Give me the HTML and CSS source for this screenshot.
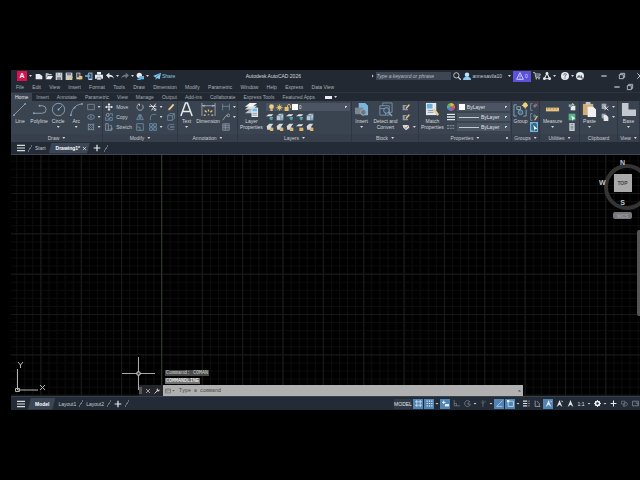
FILE: index.html
```
<!DOCTYPE html>
<html lang="en">
<head>
<meta charset="utf-8">
<title>Autodesk AutoCAD 2026</title>
<link rel="stylesheet" href="styles.css">
</head>
<body>
<svg class="sprite" aria-hidden="true">
  <symbol id="new" viewBox="0 0 12 12"><path d="M1 3h6l4 3v5H1z" fill="#e8ebee"/></symbol>
  <symbol id="open" viewBox="0 0 12 12"><path d="M1 2h4l1 1h4v2H4l-3 5z" fill="#c3c9cf"/><path d="M4 6h8l-3 5H1z" fill="#eef0f2"/></symbol>
  <symbol id="save" viewBox="0 0 12 12"><path d="M1 1h10v11H1z" fill="#c9ced3"/><path d="M3 1h6v4H3zM3 8h6v4H3z" fill="#78828c"/><path d="M4 2h4v2H4z" fill="#fff"/></symbol>
  <symbol id="saveas" viewBox="0 0 12 12"><path d="M1 1h10v11H1z" fill="#c9ced3"/><path d="M3 1h6v4H3z" fill="#78828c"/><path d="M5 11l5-5 2 2-5 4z" fill="#e6c278"/></symbol>
  <symbol id="phone" viewBox="0 0 12 12"><path d="M2 1h6v10H2z" fill="#d9d3c4"/><path d="M3 2h4v6H3z" fill="#4e5661"/><path d="M6 6h5v5H6z" fill="#e2c27c"/></symbol>
  <symbol id="mobile" viewBox="0 0 12 12"><path d="M5 1h6v11H5z" fill="#b9d7ec"/><path d="M6 2h4v8H6z" fill="#39506a"/><path d="M0 5h4V3l4 3-4 3V7H0z" fill="#60b5e6"/></symbol>
  <symbol id="print" viewBox="0 0 12 12"><path d="M3 0h6v4h3v6H9v2H3v-2H0V4h3z" fill="#e8ebee"/><path d="M3 4h6M3 8h6v3H3z" fill="none" stroke="#6c7681"/></symbol>
  <symbol id="undo" viewBox="0 0 12 12"><path d="M0 5l5-4v3c4 0 6 2 7 6-2-3-4-3-7-3v3z" fill="#e8ebee"/></symbol>
  <symbol id="redo" viewBox="0 0 12 12"><path d="M12 5L7 1v3C3 4 1 6 0 10c2-3 4-3 7-3v3z" fill="#6d7680"/></symbol>
  <symbol id="globe" viewBox="0 0 12 12"><circle cx="5" cy="5" r="4" fill="#e8ebee"/><path d="M5 6h7v5H5z" fill="#67b5e3"/><path d="M2 11h5" stroke="#67b5e3" stroke-width="2"/></symbol>
  <symbol id="send" viewBox="0 0 12 12"><path d="M0 6L12 1l-2 10-4-2-2 3V8z" fill="#7dcdf2"/><path d="M4 8l6-5" stroke="#27536d"/></symbol>
  <symbol id="mag" viewBox="0 0 12 12"><circle cx="5" cy="5" r="4" fill="none" stroke="#c3c9cf" stroke-width="1.4"/><path d="M8 8l4 4" stroke="#c3c9cf" stroke-width="2"/></symbol>
  <symbol id="user" viewBox="0 0 12 12"><circle cx="6" cy="4" r="3.4" fill="#bfe1f5"/><path d="M0 12c0-4 2-5 6-5s6 1 6 5z" fill="#8fc9ed"/></symbol>
  <symbol id="tri" viewBox="0 0 12 12"><path d="M6 1l5 10H1zM6 5v3M6 9v1" fill="none" stroke="currentColor" stroke-width="1.3"/></symbol>
  <symbol id="cart" viewBox="0 0 12 12"><path d="M0 1h3l1 7h7M3 3h8l-1 3H4" fill="none" stroke="#aeb4bb" stroke-width="1.5"/><circle cx="5" cy="10" r="1.2" fill="#aeb4bb"/><circle cx="9" cy="10" r="1.2" fill="#aeb4bb"/></symbol>
  <symbol id="app" viewBox="0 0 12 12"><path d="M6 2l4 8H2z" fill="none" stroke="#e8ebee" stroke-width="1.6"/><circle cx="6" cy="2" r="2" fill="#e8ebee"/><circle cx="2" cy="10" r="2" fill="#e8ebee"/><circle cx="10" cy="10" r="2" fill="#e8ebee"/></symbol>
  <symbol id="help" viewBox="0 0 12 12"><circle cx="6" cy="6" r="6" fill="#e8ebee"/><path d="M4 5c0-3 4-3 4-1 0 1-2 1-2 3M6 8v2" fill="none" stroke="#414954" stroke-width="1.3"/></symbol>
  <symbol id="chat" viewBox="0 0 12 12"><circle cx="6" cy="6" r="6" fill="#e8ebee"/><path d="M3 9V6h3v3M8 5v4h3" stroke="#414954" stroke-width="1.5" fill="none"/></symbol>
  <symbol id="min" viewBox="0 0 12 12"><path d="M2 6h8" stroke="#e0e3e6" stroke-width="1.6"/></symbol>
  <symbol id="restore" viewBox="0 0 12 12"><path d="M2 4h6v6H2zM4 4V2h6v6H8" fill="none" stroke="#c3c9cf" stroke-width="1.3"/></symbol>
  <symbol id="x" viewBox="0 0 12 12"><path d="M2 2l8 8M10 2l-8 8" stroke="currentColor" stroke-width="1.5"/></symbol>
  <symbol id="burger" viewBox="0 0 12 12"><path d="M0 2h12M0 6h12M0 10h12" stroke="#d9dde0" stroke-width="1.8"/></symbol>
  <symbol id="plus" viewBox="0 0 12 12"><path d="M6 1v10M1 6h10" stroke="#e8ebee" stroke-width="1.8"/></symbol>

  <symbol id="line" viewBox="0 0 16 16"><path d="M2 14L14 2" stroke="#a9b2bb" stroke-width=".8"/><circle cx="2" cy="14" r="1" fill="#7fa9c4"/><circle cx="14" cy="2" r="1" fill="#7fa9c4"/></symbol>
  <symbol id="pline" viewBox="0 0 16 16"><path d="M2 12h9a4 4 0 0 0 0-8H8" fill="none" stroke="#a9b2bb" stroke-width=".8"/><circle cx="2" cy="12" r="1" fill="#7fa9c4"/><circle cx="8" cy="4" r="1" fill="#7fa9c4"/></symbol>
  <symbol id="circle" viewBox="0 0 16 16"><circle cx="8" cy="8" r="6.6" fill="none" stroke="#a9b2bb" stroke-width=".8"/><path d="M8 8l4-4" stroke="#6ba6cc"/><circle cx="8" cy="8" r="1" fill="#7fc0ea"/></symbol>
  <symbol id="arc" viewBox="0 0 16 16"><path d="M2 14C3 7 7 3 14 2" fill="none" stroke="#a9b2bb" stroke-width=".8"/><circle cx="2" cy="14" r="1" fill="#7fa9c4"/><circle cx="6" cy="6" r="1" fill="#7fa9c4"/><circle cx="14" cy="2" r="1" fill="#7fa9c4"/></symbol>
  <symbol id="rect" viewBox="0 0 12 12"><path d="M1 2h10v8H1z" fill="none" stroke="#8f9ca8"/></symbol>
  <symbol id="ellipse" viewBox="0 0 12 12"><ellipse cx="6" cy="6" rx="5" ry="3.5" fill="none" stroke="#9aa7b3"/><circle cx="6" cy="6" r="1" fill="#7fc0ea"/></symbol>
  <symbol id="hatch" viewBox="0 0 12 12"><path d="M2 1v10M10 1v10M2 2h8M2 10h8" stroke="#9aa7b3" fill="none"/><path d="M3 6l3-3M3 9l6-6M6 9l3-3" stroke="#6798b8"/></symbol>
  <symbol id="move" viewBox="0 0 12 12"><path d="M6 1v10M1 6h10" stroke="#e8ebee" stroke-width="1.5"/><path d="M6 0l2 3H4zM6 12l2-3H4zM0 6l3-2v4zM12 6L9 4v4z" fill="#e8ebee"/></symbol>
  <symbol id="copy" viewBox="0 0 12 12"><circle cx="4" cy="3" r="2.3" fill="none" stroke="#b5bdc5"/><path d="M1 6v5h4V7M7 1h4v4M7 7h4v4H7z" fill="none" stroke="#73a9c8"/></symbol>
  <symbol id="stretch" viewBox="0 0 12 12"><path d="M1 1h4v10H1zM7 4h3v7H5" fill="none" stroke="#a4b1bd"/><path d="M7 9h5" stroke="#72b4dc"/></symbol>
  <symbol id="rotate" viewBox="0 0 12 12"><path d="M9 2.5A4.7 4.7 0 1 1 4 2" fill="none" stroke="#b5bdc5" stroke-width="1.2"/><path d="M2 1h4v4z" fill="#b5bdc5"/></symbol>
  <symbol id="trim" viewBox="0 0 12 12"><path d="M2 2l8 8M10 1L4 11M0 5h11" stroke="#e8ebee" stroke-width="1.3"/><circle cx="9" cy="10" r="1.6" fill="none" stroke="#e8ebee"/></symbol>
  <symbol id="pencil" viewBox="0 0 12 12"><path d="M2 9l7-8 2 2-7 8z" fill="#ead0a0"/><path d="M1 11l1-3 2 3z" fill="#e7785e"/></symbol>
  <symbol id="mirror" viewBox="0 0 12 12"><path d="M5 2v8H1zM7 2v8h4z" fill="none" stroke="#79a8c4"/></symbol>
  <symbol id="fillet" viewBox="0 0 12 12"><path d="M2 11V8c0-4 2-6 6-6h3" fill="none" stroke="#78a0ba"/></symbol>
  <symbol id="box" viewBox="0 0 12 12"><path d="M1 4h7v7H1zM1 4l3-3h7l-3 3M11 1v7l-3 3" fill="none" stroke="#7ba1b9"/></symbol>
  <symbol id="scale" viewBox="0 0 12 12"><path d="M1 1h10v10H1zM1 6h5v5" fill="none" stroke="#7ba1b9"/></symbol>
  <symbol id="array" viewBox="0 0 12 12"><path d="M1 1h4v4H1zM7 1h4v4H7zM1 7h4v4H1zM7 7h4v4H7z" fill="#31455a" stroke="#7fadc9"/></symbol>
  <symbol id="offset" viewBox="0 0 12 12"><path d="M11 2H5a4 4 0 0 0 0 8h6M11 5H6a1 1 0 0 0 0 2h5" fill="none" stroke="#7893a7"/></symbol>
  <symbol id="text" viewBox="0 0 16 16"><path d="M2 15L7 1h2l5 14M4 10h8" fill="none" stroke="#e8ebee" stroke-width="1.6"/></symbol>
  <symbol id="dim" viewBox="0 0 16 16"><path d="M1 1v14M15 1v14M1 4h14" stroke="#b5bdc5" stroke-width=".8"/><path d="M1 4l3-1v2zM15 4l-3-1v2z" fill="#b5bdc5"/><path d="M8 8v2M4 9l2 2M12 9l-2 2M3 14h2M11 14h2M8 13v1" stroke="#e8c678" stroke-width="1.4"/></symbol>
  <symbol id="linear" viewBox="0 0 12 12"><path d="M1 1v10M11 1v10M1 5h10" stroke="#7b9db5"/></symbol>
  <symbol id="leader" viewBox="0 0 12 12"><path d="M1 11l5-7h2" fill="none" stroke="#b5bdc5"/><circle cx="9.500" cy="3.500" r="2" fill="none" stroke="#b5bdc5"/></symbol>
  <symbol id="table" viewBox="0 0 12 12"><path d="M1 1h10v10H1zM1 4h10M1 7h10M5 1v10" fill="#4f5c6b" stroke="#8c99a6"/></symbol>
  <symbol id="layers" viewBox="0 0 16 16"><path d="M1 12l5-4h8l-5 4z" fill="#b8c0c7"/><path d="M1 8l5-4h8l-5 4z" fill="#d5dadd"/><path d="M1 5l5-4h8l-5 4z" fill="#f1f3f4"/><path d="M8 6h7v10H8z" fill="#e4e8ec"/><path d="M9 7h5v3H9z" fill="#71b9e5"/><path d="M9 12h5M9 14h5" stroke="#8795a2"/></symbol>
  <symbol id="bulb" viewBox="0 0 12 12"><circle cx="6" cy="4.500" r="4" fill="#edd27d"/><path d="M4 8h4v4H4z" fill="#c9b680"/></symbol>
  <symbol id="sun" viewBox="0 0 12 12"><circle cx="6" cy="6" r="3.5" fill="#efce70"/><path d="M6 0v12M0 6h12M2 2l8 8M10 2l-8 8" stroke="#dfbb61"/></symbol>
  <symbol id="lock" viewBox="0 0 12 12"><path d="M1 5h7v7H1z" fill="#e7c16b"/><path d="M6 5V3c0-3 5-3 5 0v4" fill="none" stroke="#e7c16b" stroke-width="1.6"/></symbol>
  <symbol id="lay-a" viewBox="0 0 12 12"><path d="M0 5l4-3h7L8 5z" fill="#e0e5e8"/><path d="M4 8l3-2h4L9 9z" fill="#68afc8"/><circle cx="8" cy="9" r="2" fill="#45a78f"/></symbol>
  <symbol id="lay-b" viewBox="0 0 12 12"><path d="M1 4l4-3h6v6L7 11H1z" fill="#bac9d2"/><path d="M1 4h6l4-3M7 4v7" stroke="#5a788b" fill="none"/><path d="M7 7h4v4H7z" fill="#6fb1d3"/></symbol>
  <symbol id="lay-c" viewBox="0 0 12 12"><path d="M1 5l4-4h6L8 5v5H2z" fill="#d5dadd"/><path d="M6 7h5v5H6z" fill="#d9b875"/></symbol>
  <symbol id="lay-d" viewBox="0 0 12 12"><path d="M0 5l4-3h7L8 5z" fill="#e0e5e8"/><path d="M5 7h6v5H5z" fill="#e0b35f"/></symbol>
  <symbol id="insert" viewBox="0 0 16 16"><path d="M5 1h7l3 3v10H8V9H5z" fill="#79b6dc"/><path d="M1 6h9v7H1z" fill="#7c8793"/><circle cx="10" cy="11" r="3" fill="#6a7581" stroke="#a2abb4"/></symbol>
  <symbol id="detect" viewBox="0 0 16 16"><path d="M2 4h10v10H2zM5 4V1h10v10h-3M2 7h6v7" fill="none" stroke="#7895a9"/><circle cx="9" cy="9" r="3" fill="#3d5063" stroke="#82a8c1"/><path d="M11 11l4 4" stroke="#82a8c1" stroke-width="1.5"/></symbol>
  <symbol id="edit" viewBox="0 0 12 12"><path d="M1 3h6v2H4v4h5v2H1z" fill="#8f9aa5"/><path d="M5 8l5-6 2 1-5 6z" fill="#e1c489"/></symbol>
  <symbol id="tag" viewBox="0 0 12 12"><path d="M1 3h9l1 4-5 4-4-4z" fill="#d7dce0"/><path d="M4 6l2 2 4-5" fill="none" stroke="#b76c4e" stroke-width="1.3"/></symbol>
  <symbol id="match" viewBox="0 0 16 16"><path d="M1 1h11v13H1z" fill="#e4e8ec"/><path d="M2 2h6v5H2z" fill="#68afe0"/><path d="M3 9h6M3 11h6" stroke="#8795a2"/><path d="M8 8l2-1 5 6-2 2z" fill="#e8cf95"/></symbol>
  <symbol id="wheel" viewBox="0 0 12 12"><path d="M6 6V0a6 6 0 0 1 5.200 3z" fill="#efb64c"/><path d="M6 6l5.200-3a6 6 0 0 1 0 6z" fill="#e5644f"/><path d="M6 6l5.200 3A6 6 0 0 1 6 12z" fill="#c44f9d"/><path d="M6 6v6A6 6 0 0 1 .8 9z" fill="#4f82d7"/><path d="M6 6L.8 9a6 6 0 0 1 0-6z" fill="#47b4a5"/><path d="M6 6L.8 3A6 6 0 0 1 6 0z" fill="#7cbd59"/></symbol>
  <symbol id="bars" viewBox="0 0 12 12"><path d="M0 2h12M0 6h12M0 10h12" stroke="#e0e4e7" stroke-width="2"/></symbol>
  <symbol id="ltype" viewBox="0 0 12 12"><path d="M0 4h12M0 8h12" stroke="#7a8591" stroke-width="2" stroke-dasharray="3 1"/></symbol>
  <symbol id="group" viewBox="0 0 16 16"><path d="M4 3H1v12h3M11 15h3V8" fill="none" stroke="#8ba8bb"/><path d="M4 5h4v3H4z" fill="none" stroke="#8ba8bb"/><circle cx="8" cy="11" r="2.500" fill="#48647a" stroke="#76a5c3"/><circle cx="13" cy="3.500" r="2.600" fill="#f0d07c"/><path d="M13 0v7M9.500 3.500h7" stroke="#f0d07c"/></symbol>
  <symbol id="ungroup" viewBox="0 0 12 12"><path d="M4 1H1v10h3M6 3h2v3H6z" fill="none" stroke="#82a8c1"/><path d="M8 1l3 4M11 1L8 5" stroke="#d9566d" stroke-width="1.5"/></symbol>
  <symbol id="gedit" viewBox="0 0 12 12"><path d="M4 1H1v10h3M6 3h2v3H6z" fill="none" stroke="#82a8c1"/><path d="M6 11l4-7 2 1-4 6z" fill="#e1c489"/></symbol>
  <symbol id="gsel" viewBox="0 0 12 12"><path d="M4 1H1v10h3M9 1h2v4" fill="none" stroke="#a9d3ea"/><path d="M5 3l6 6H8l-1 3z" fill="#fff"/></symbol>
  <symbol id="measure" viewBox="0 0 16 16"><path d="M1 6h14v4H1z" fill="#e6c284"/><path d="M3 6v2M6 6v2M9 6v2M12 6v2" stroke="#97794a" stroke-width=".8"/></symbol>
  <symbol id="idp" viewBox="0 0 12 12"><path d="M4 4h7v7H4z" fill="#e8ebee"/><path d="M1 2h5v4H1z" fill="#77a8c5"/><path d="M6 1l3 2" stroke="#e8c678" stroke-width="2"/></symbol>
  <symbol id="qsel" viewBox="0 0 12 12"><path d="M1 1h10v10H1z" fill="#56b58b"/><path d="M5 4l6 4-3 1-1 3z" fill="#fff"/></symbol>
  <symbol id="calc" viewBox="0 0 12 12"><path d="M2 0h8v12H2z" fill="#c6ced5"/><path d="M4 2h4M4 5h4M4 7h4M4 9h4" stroke="#566575"/></symbol>
  <symbol id="paste" viewBox="0 0 16 16"><path d="M1 2h11v12H1z" fill="#d4ad76"/><path d="M4 0h5v3H4z" fill="#c3c9cf"/><path d="M6 5h6l3 3v8H6z" fill="#eef0f2"/></symbol>
  <symbol id="cut" viewBox="0 0 12 12"><path d="M1 1h7v8H1z" fill="#9fa9b3"/><path d="M5 5l6 6M11 5l-6 6" stroke="#e8ebee" stroke-width="1.3"/></symbol>
  <symbol id="copyclip" viewBox="0 0 12 12"><path d="M1 1h6v7H1z" fill="#9fa9b3"/><path d="M4 3h4l3 3v6H4z" fill="#e4e7ea"/></symbol>
  <symbol id="base" viewBox="0 0 16 16"><path d="M1 1h7v7h8v7H1z" fill="#c2c8ce"/></symbol>

  <symbol id="grid" viewBox="0 0 12 12"><path d="M3 0v12M9 0v12M0 3h12M0 9h12" stroke="#dcebf7" stroke-width="1.2"/></symbol>
  <symbol id="dots" viewBox="0 0 12 12"><path d="M1 2h10M1 6h10M1 10h10" stroke="#e5f1fa" stroke-width="2" stroke-dasharray="2 2"/></symbol>
  <symbol id="dyn" viewBox="0 0 12 12"><path d="M3 1v6M0 4h6" stroke="#fff" stroke-width="1.4"/><path d="M5 7h7v4H5z" fill="#e5f1fa"/></symbol>
  <symbol id="ortho" viewBox="0 0 12 12"><path d="M2 0v10h10M2 6h4v4" fill="none" stroke="#8a939d"/></symbol>
  <symbol id="polar" viewBox="0 0 12 12"><path d="M10 3a5 5 0 1 0 1 4H6l4-5" fill="none" stroke="#98a1aa"/></symbol>
  <symbol id="iso" viewBox="0 0 12 12"><path d="M5 0v12M5 6l5-4M2 3l3 3" fill="none" stroke="#7d8792"/></symbol>
  <symbol id="track" viewBox="0 0 12 12"><path d="M1 11L11 1M1 11h10" fill="none" stroke="#dcebf7"/></symbol>
  <symbol id="osnap" viewBox="0 0 12 12"><path d="M2 2h9v9H2z" fill="none" stroke="#dcebf7" stroke-width="1.2"/><path d="M0 0h4v4H0z" fill="#dcebf7"/></symbol>
  <symbol id="lw" viewBox="0 0 12 12"><path d="M0 2h7M0 6h7M0 10h7" stroke="#d9dde0" stroke-width="2"/><path d="M8 2h4M8 6h4M8 10h4" stroke="#aeb5bc"/></symbol>
  <symbol id="cycle" viewBox="0 0 12 12"><path d="M2 11V1M2 11h9M5 2l4 4v4" fill="none" stroke="#b7bdc4" stroke-width="1.2"/></symbol>
  <symbol id="ann" viewBox="0 0 12 12"><path d="M6 0l2 5 3 7-5-4-5 4 3-7z" fill="currentColor"/></symbol>
  <symbol id="ann-on" viewBox="0 0 12 12"><path d="M6 0l2 5 3 7-5-4-5 4 3-7z" fill="currentColor"/><path d="M9 1l3 3M12 1L9 4" stroke="currentColor"/></symbol>
  <symbol id="gear" viewBox="0 0 12 12"><circle cx="6" cy="6" r="3.500" fill="none" stroke="#f0f1f2" stroke-width="2.500"/><path d="M6 0v3M6 9v3M0 6h3M9 6h3M2 2l2 2M8 8l2 2M10 2L8 4M2 10l2-2" stroke="#f0f1f2" stroke-width="1.500"/></symbol>
  <symbol id="isolate" viewBox="0 0 12 12"><path d="M1 2h6v5H1zM4 7v4h3" fill="none" stroke="#7d8792"/><circle cx="8" cy="7" r="3" fill="none" stroke="#7d8792"/></symbol>
  <symbol id="clean" viewBox="0 0 12 12"><path d="M1 2h10v8H1zM6 5h3v3" fill="none" stroke="#a9b0b8"/></symbol>
  <symbol id="wrench" viewBox="0 0 12 12"><path d="M1 11l6-6" stroke="#c3c9cf" stroke-width="2"/><path d="M11 3a3 3 0 1 1-3-2L8 4z" fill="#c3c9cf"/></symbol>
  <symbol id="prompt" viewBox="0 0 12 12"><path d="M1 2h10v8H1zM1 4h10M3 6l1 1-1 1" fill="none" stroke="#555"/></symbol>
</svg>

<main class="app">
  <header class="titlebar">
    <div class="quick">
      <button class="logo" aria-label="Application menu">A</button><i class="caret"></i>
      <div class="files">
        <button aria-label="New"><svg><use href="#new"/></svg></button>
        <button aria-label="Open"><svg><use href="#open"/></svg></button>
        <button aria-label="Save"><svg><use href="#save"/></svg></button>
        <button aria-label="Save as"><svg><use href="#saveas"/></svg></button>
        <button aria-label="Open from mobile"><svg><use href="#phone"/></svg></button>
        <button aria-label="Save to mobile"><svg><use href="#mobile"/></svg></button>
        <button aria-label="Plot"><svg><use href="#print"/></svg></button>
      </div>
      <button aria-label="Undo"><svg><use href="#undo"/></svg></button><i class="caret"></i>
      <button aria-label="Redo"><svg><use href="#redo"/></svg></button><i class="caret"></i>
      <button aria-label="Workspace"><svg><use href="#globe"/></svg></button><i class="caret"></i>
      <button class="share"><svg><use href="#send"/></svg>Share</button>
    </div>
    <h1>Autodesk AutoCAD 2026</h1>
    <div class="account">
      <i class="caret side"></i>
      <input class="search" type="text" aria-label="Search" placeholder="Type a keyword or phrase">
      <button aria-label="Find"><svg><use href="#mag"/></svg></button>
      <button class="user"><svg><use href="#user"/></svg>annesavila10</button>
      <i class="caret"></i>
      <button class="alert"><svg><use href="#tri"/></svg>0</button>
      <button aria-label="Store"><svg><use href="#cart"/></svg></button>
      <button aria-label="Apps"><svg><use href="#app"/></svg></button><i class="caret"></i>
      <button class="help" aria-label="Help"><svg><use href="#help"/></svg></button><i class="caret"></i>
      <button aria-label="Assistant"><svg><use href="#chat"/></svg></button>
    </div>
    <div class="winctl">
      <button aria-label="Minimize"><svg><use href="#min"/></svg></button>
      <button aria-label="Restore"><svg><use href="#restore"/></svg></button>
      <button aria-label="Close"><svg><use href="#x"/></svg></button>
    </div>
  </header>

  <nav class="menubar">
    <div class="menus">
      <a href="#">File</a><a href="#">Edit</a><a href="#">View</a><a href="#">Insert</a><a href="#">Format</a><a href="#">Tools</a><a href="#">Draw</a><a href="#">Dimension</a><a href="#">Modify</a><a href="#">Parametric</a><a href="#">Window</a><a href="#">Help</a><a href="#">Express</a><a href="#">Data View</a>
    </div>
    <div class="docctl">
      <button aria-label="Minimize drawing"><svg><use href="#min"/></svg></button>
      <button aria-label="Restore drawing"><svg><use href="#restore"/></svg></button>
    </div>
  </nav>

  <nav class="tabs">
    <a class="on" href="#">Home</a><a href="#">Insert</a><a href="#">Annotate</a><a href="#">Parametric</a><a href="#">View</a><a href="#">Manage</a><a href="#">Output</a><a href="#">Add-ins</a><a href="#">Collaborate</a><a href="#">Express Tools</a><a href="#">Featured Apps</a>
    <button class="pill" aria-label="Ribbon display"></button><i class="caret"></i>
  </nav>

  <div class="ribbon">
    <section class="panel">
      <div class="tools">
        <button class="big"><svg><use href="#line"/></svg>Line</button>
        <button class="big"><svg><use href="#pline"/></svg>Polyline</button>
        <button class="big"><svg><use href="#circle"/></svg>Circle<i class="caret"></i></button>
        <button class="big"><svg><use href="#arc"/></svg>Arc<i class="caret"></i></button>
        <div class="stack">
          <button aria-label="Rectangle"><svg><use href="#rect"/></svg><i class="caret"></i></button>
          <button aria-label="Ellipse"><svg><use href="#ellipse"/></svg><i class="caret"></i></button>
          <button aria-label="Hatch"><svg><use href="#hatch"/></svg><i class="caret"></i></button>
        </div>
      </div>
      <h2>Draw<i class="caret"></i></h2>
    </section>
    <section class="panel">
      <div class="tools">
        <div class="stack">
          <button><svg><use href="#move"/></svg>Move</button>
          <button><svg><use href="#copy"/></svg>Copy</button>
          <button><svg><use href="#stretch"/></svg>Stretch</button>
        </div>
        <div class="stack">
          <button aria-label="Rotate"><svg><use href="#rotate"/></svg></button>
          <button aria-label="Mirror"><svg><use href="#mirror"/></svg></button>
          <button aria-label="Scale"><svg><use href="#scale"/></svg></button>
        </div>
        <div class="stack">
          <button aria-label="Trim"><svg><use href="#trim"/></svg><i class="caret"></i></button>
          <button aria-label="Fillet"><svg><use href="#fillet"/></svg><i class="caret"></i></button>
          <button aria-label="Array"><svg><use href="#array"/></svg><i class="caret"></i></button>
        </div>
        <div class="stack">
          <button aria-label="Erase"><svg><use href="#pencil"/></svg></button>
          <button aria-label="Explode"><svg><use href="#box"/></svg></button>
          <button aria-label="Offset"><svg><use href="#offset"/></svg></button>
        </div>
      </div>
      <h2>Modify<i class="caret"></i></h2>
    </section>
    <section class="panel">
      <div class="tools">
        <button class="big"><svg><use href="#text"/></svg>Text<i class="caret"></i></button>
        <button class="big"><svg><use href="#dim"/></svg>Dimension</button>
        <div class="stack">
          <button aria-label="Linear"><svg><use href="#linear"/></svg><i class="caret"></i></button>
          <button aria-label="Leader"><svg><use href="#leader"/></svg><i class="caret"></i></button>
          <button aria-label="Table"><svg><use href="#table"/></svg></button>
        </div>
      </div>
      <h2>Annotation<i class="caret"></i></h2>
    </section>
    <section class="panel">
      <div class="tools spread">
        <button class="big"><svg><use href="#layers"/></svg>Layer<br>Properties</button>
        <div class="stack wide">
          <div class="combo layer">
            <svg><use href="#bulb"/></svg><svg><use href="#sun"/></svg><svg><use href="#lock"/></svg><b class="swatch"></b>
            <select aria-label="Layer"><option>0</option></select>
          </div>
          <div class="icons">
            <button aria-label="Off"><svg><use href="#lay-a"/></svg></button>
            <button aria-label="Isolate"><svg><use href="#lay-b"/></svg></button>
            <button aria-label="Freeze"><svg><use href="#lay-a"/></svg></button>
            <button aria-label="Lock"><svg><use href="#lay-a"/></svg></button>
            <button aria-label="Make current"><svg><use href="#lay-b"/></svg></button>
          </div>
          <div class="icons">
            <button aria-label="Turn all on"><svg><use href="#lay-c"/></svg></button>
            <button aria-label="Unisolate"><svg><use href="#lay-c"/></svg></button>
            <button aria-label="Thaw"><svg><use href="#lay-c"/></svg></button>
            <button aria-label="Unlock"><svg><use href="#lay-d"/></svg></button>
            <button aria-label="Match layer"><svg><use href="#lay-c"/></svg></button>
          </div>
        </div>
      </div>
      <h2>Layers<i class="caret"></i></h2>
    </section>
    <section class="panel">
      <div class="tools">
        <button class="big"><svg><use href="#insert"/></svg>Insert<i class="caret"></i></button>
        <button class="big"><svg><use href="#detect"/></svg>Detect and<br>Convert</button>
        <div class="stack">
          <button aria-label="Create block"><svg><use href="#edit"/></svg></button>
          <button aria-label="Edit block"><svg><use href="#edit"/></svg></button>
          <button aria-label="Edit attribute"><svg><use href="#tag"/></svg><i class="caret"></i></button>
        </div>
      </div>
      <h2>Block<i class="caret"></i></h2>
    </section>
    <section class="panel">
      <div class="tools spread">
        <button class="big"><svg><use href="#match"/></svg>Match<br>Properties</button>
        <div class="stack wide">
          <div class="row"><svg><use href="#wheel"/></svg><div class="combo"><b class="swatch"></b><select aria-label="Color"><option>ByLayer</option></select></div></div>
          <div class="row"><svg><use href="#bars"/></svg><div class="combo"><b class="rule"></b><select aria-label="Lineweight"><option>ByLayer</option></select></div></div>
          <div class="row"><svg><use href="#ltype"/></svg><div class="combo"><b class="rule"></b><select aria-label="Linetype"><option>ByLayer</option></select></div></div>
        </div>
      </div>
      <h2 class="launch">Properties<i class="caret"></i></h2>
    </section>
    <section class="panel">
      <div class="tools">
        <button class="big"><svg><use href="#group"/></svg>Group</button>
        <div class="stack">
          <button aria-label="Ungroup"><svg><use href="#ungroup"/></svg></button>
          <button aria-label="Group edit"><svg><use href="#gedit"/></svg></button>
          <button class="picked" aria-label="Group selection"><svg><use href="#gsel"/></svg></button>
        </div>
      </div>
      <h2>Groups<i class="caret"></i></h2>
    </section>
    <section class="panel">
      <div class="tools">
        <button class="big"><svg><use href="#measure"/></svg>Measure<i class="caret"></i></button>
        <div class="stack">
          <button aria-label="ID point"><svg><use href="#idp"/></svg></button>
          <button aria-label="Quick select"><svg><use href="#qsel"/></svg></button>
          <button aria-label="Calculator"><svg><use href="#calc"/></svg></button>
        </div>
      </div>
      <h2>Utilities<i class="caret"></i></h2>
    </section>
    <section class="panel">
      <div class="tools">
        <button class="big"><svg><use href="#paste"/></svg>Paste<i class="caret"></i></button>
        <div class="stack">
          <button aria-label="Cut"><svg><use href="#cut"/></svg><i class="caret"></i></button>
          <button aria-label="Copy clip"><svg><use href="#copyclip"/></svg><i class="caret"></i></button>
        </div>
      </div>
      <h2>Clipboard</h2>
    </section>
    <section class="panel">
      <div class="tools">
        <button class="big"><svg><use href="#base"/></svg>Base<i class="caret"></i></button>
      </div>
      <h2>View<i class="caret"></i></h2>
    </section>
  </div>

  <nav class="doctabs">
    <button aria-label="Menu"><svg><use href="#burger"/></svg></button>
    <i class="slash"></i><a href="#">Start</a>
    <a class="on" href="#">Drawing1*<svg><use href="#x"/></svg></a>
    <button aria-label="New tab"><svg><use href="#plus"/></svg></button><i class="slash"></i>
  </nav>

  <section class="canvas">
    <svg class="gridlines" aria-hidden="true">
      <defs>
        <pattern id="minor" width="8.070" height="8.070" x="29.400" y="38" patternUnits="userSpaceOnUse"><path d="M.5 0v8.070M0 .5h8.070" stroke="#0c0d0c"/></pattern>
        <pattern id="major" width="40.350" height="40.350" x="29.400" y="38" patternUnits="userSpaceOnUse"><path d="M.5 0v40.350M0 .5h40.350" stroke="#191b19"/></pattern>
      </defs>
      <rect width="100%" height="100%" fill="url(#minor)"/>
      <rect width="100%" height="100%" fill="url(#major)"/>
      <path d="M150.500 0v230" stroke="#2b352b"/>
    </svg>
    <svg class="ucs" viewBox="0 0 32 32" aria-label="UCS icon"><path d="M2.500 8v21H23M.5 27.500h4v3h-4zM3 1l2.500 3L8 1M5.500 4v3M25 24l5 5M30 24l-5 5" fill="none" stroke="#b4b4b4"/></svg>
    <svg class="cross" viewBox="0 0 34 34" aria-hidden="true"><path d="M17.500 0v33M1 16.500h33" stroke="#a9a9a9"/><path d="M16 15h3v3h-3z" fill="#222" stroke="#c8c8c8"/></svg>
    <div class="cube">
      <span>N</span><span class="w">W</span><button>TOP</button><span>S</span>
    </div>
    <button class="wcs">WCS</button>
    <div class="navbar"></div>
    <div class="history"><span>Command: COMAN</span><span>COMMANDLINE</span></div>
    <div class="command">
      <i class="grip"></i>
      <button aria-label="Close command line"><svg><use href="#x"/></svg></button>
      <button aria-label="Customize"><svg><use href="#wrench"/></svg></button>
      <label class="prompt"><svg><use href="#prompt"/></svg><i class="caret"></i><input type="text" aria-label="Command" placeholder="Type a command"><i class="caret up"></i></label>
    </div>
  </section>

  <footer class="status">
    <nav class="layouts">
      <button aria-label="Layouts"><svg><use href="#burger"/></svg></button>
      <a class="on" href="#">Model</a><a href="#">Layout1</a><i class="slash"></i><a href="#">Layout2</a><i class="slash"></i>
      <button aria-label="New layout"><svg><use href="#plus"/></svg></button><i class="slash"></i>
    </nav>
    <div class="toggles">
      <button class="model">MODEL</button>
      <button class="lit" aria-label="Grid"><svg><use href="#grid"/></svg></button>
      <button class="lit" aria-label="Snap"><svg><use href="#dots"/></svg></button><i class="caret"></i>
      <button class="lit" aria-label="Dynamic input"><svg><use href="#dyn"/></svg></button>
      <button aria-label="Ortho"><svg><use href="#ortho"/></svg></button>
      <button aria-label="Polar"><svg><use href="#polar"/></svg></button><i class="caret"></i>
      <button aria-label="Isometric"><svg><use href="#iso"/></svg></button><i class="caret"></i>
      <button class="lit" aria-label="Tracking"><svg><use href="#track"/></svg></button>
      <button class="lit" aria-label="Object snap"><svg><use href="#osnap"/></svg></button><i class="caret"></i>
      <button aria-label="Lineweight"><svg><use href="#lw"/></svg></button>
      <button aria-label="Cycling"><svg><use href="#cycle"/></svg></button>
      <button class="lit" aria-label="Annotation visibility"><svg><use href="#ann-on"/></svg></button>
      <button aria-label="Auto scale"><svg><use href="#ann-on"/></svg></button>
      <button aria-label="Annotation scale"><svg><use href="#ann"/></svg></button>
      <button>1:1</button><i class="caret"></i>
      <button aria-label="Workspace"><svg><use href="#gear"/></svg></button><i class="caret"></i>
      <button aria-label="Monitor"><svg><use href="#plus"/></svg></button>
      <button aria-label="Isolate objects"><svg><use href="#isolate"/></svg></button>
      <button aria-label="Clean screen"><svg><use href="#clean"/></svg></button>
    </div>
  </footer>
</main>
</body>
</html>
```
FILE: styles.css
```
* { box-sizing: border-box; }
body {
  margin: 0;
  background: #000;
  color: #c6cbd0;
  font: 5px/6px "Liberation Sans", sans-serif;
}
button, input, select {
  margin: 0; padding: 0; border: 0; background: none;
  color: inherit; font: inherit; border-radius: 0;
}
button { display: flex; align-items: center; justify-content: center; white-space: nowrap; }
a { color: inherit; text-decoration: none; white-space: nowrap; }
h1, h2 { margin: 0; font: inherit; white-space: nowrap; }
svg { display: block; width: 8px; height: 8px; flex: none; }
.sprite { position: absolute; width: 0; height: 0; }

.app {
  display: flex; flex-direction: column;
  height: 100vh; padding: 70px 0 70px 11px;
  overflow: hidden;
}
.caret {
  flex: none; width: 3px; height: 2px;
  background: #d0d4d8; clip-path: polygon(0 0, 100% 0, 50% 100%);
}
.caret.side { width: 2px; height: 4px; clip-path: polygon(0 0, 100% 50%, 0 100%); }
.caret.up { clip-path: polygon(50% 0, 100% 100%, 0 100%); background: #555; }
.slash { flex: none; width: 4px; height: 7px; background: linear-gradient(120deg, transparent 42%, #66707b 43%, #66707b 57%, transparent 58%); }

.titlebar { display: flex; align-items: center; height: 12px; background: #222933; }
.quick { display: flex; align-items: center; gap: 2px; flex: 227; padding-left: 6px; }
.files { display: flex; gap: 2px; padding: 0 1px; }
.logo { width: 10px; height: 10px; background: #d9124e; color: #fff; font-size: 7px; font-weight: bold; }
.share { gap: 1px; margin-left: 2px; color: #8cc9e4; }
h1 { color: #d5d9dc; }
.account { display: flex; align-items: center; flex: 281; justify-content: flex-end; gap: 2px; }
.search { flex: 0 1 75px; min-width: 0; height: 8px; padding: 0 1px; background: #3d4653; }
.search::placeholder { color: #b8bec4; font-style: italic; opacity: 1; }
.user { gap: 2px; margin-right: 4px; }
.alert { width: 18px; height: 11px; background: #5d52dc; color: #dcdcff; gap: 1px; }
.help { margin-left: 3px; }
.winctl { display: flex; flex: 0 0 60px; justify-content: flex-end; gap: 10px; margin-right: -4px; }

.menubar { display: flex; align-items: center; height: 10px; padding-left: 5px; background: #222933; color: #abb1b8; }
.menus { display: flex; justify-content: space-between; width: 51%; }
.docctl { display: flex; gap: 5px; margin-left: auto; padding-right: 6px; }
.tabs { display: flex; align-items: center; gap: 8px; height: 9px; background: #222933; border-top: 1px solid #2c343f; color: #a4abb2; }
.tabs .on { padding: 1px 4px; background: #3a4452; color: #e6e9eb; margin-right: -4px; }
.pill { width: 7px; height: 3px; margin-left: 2px; background: #e8ebee; }
.pill + .caret { margin-left: -6px; }

.ribbon {
  display: grid; height: 41px; background: #3a4350;
  grid-template-columns: 92fr 75fr 60fr 114fr 67fr 93fr 28fr 40fr 38fr 22fr;
}
.panel { display: flex; flex-direction: column; min-width: 0; padding-top: 1px; border-right: 1px solid #2e3641; }
.tools { display: flex; flex: 1; justify-content: space-around; min-width: 0; }
.tools.spread { gap: 3px; padding: 0 1px 0 2px; }
.panel h2 { display: flex; align-items: center; justify-content: center; gap: 3px; height: 8px; background: #363f4b; }
.launch::after { content: ""; position: absolute; right: 3px; width: 2px; height: 2px; background: #aeb5bc; }
.panel .launch { position: relative; }
.big { flex-direction: column; justify-content: flex-start; text-align: center; color: #d5d9dc; }
.big svg { width: 15px; height: 15px; margin-bottom: 1px; }
.big .caret { margin-top: 2px; }
.stack { display: grid; grid-template-rows: repeat(3, 10px); align-content: start; }
.stack button { gap: 3px; justify-content: flex-start; }
.wide { flex: 1; min-width: 0; }
.row { display: flex; align-items: center; gap: 2px; min-width: 0; }
.combo { display: flex; align-items: center; gap: 2px; flex: 1; min-width: 0; height: 8px; padding: 0 2px; background: #4a5462; align-self: center; }
.combo select {
  flex: 1; min-width: 0; appearance: none; color: #e0e4e7;
  background: linear-gradient(to bottom right, #d0d4d8 50%, transparent 51%) no-repeat right center / 3px 2px;
}
.combo svg { width: 7px; height: 7px; }
.layer { gap: 1px; }
.swatch { width: 6px; height: 6px; background: #fff; }
.rule { flex: 1; height: 1px; background: #c3c9cf; }
.rule + select { flex: 0 0 27px; }
.icons { display: flex; gap: 2px; align-items: center; }
.picked { background: #35698c; outline: 1px solid #73b5df; outline-offset: -1px; }

.doctabs { display: flex; align-items: center; height: 13px; padding-left: 6px; gap: 3px; background: #222b36; border-bottom: 1px solid #3d4752; }
.doctabs .on { display: flex; align-items: center; gap: 2px; height: 11px; padding: 0 3px 0 7px; background: #3b4654; color: #fff; font-weight: bold; clip-path: polygon(3px 0, 100% 0, calc(100% - 3px) 100%, 0 100%); }
.doctabs .on svg { width: 5px; height: 5px; }

.canvas { position: relative; flex: 1; min-height: 0; overflow: hidden; background: #000; }
.gridlines { position: absolute; inset: 0; width: 100%; height: 100%; }
.ucs { position: absolute; left: 4px; bottom: 3px; width: 32px; height: 32px; }
.cross { position: absolute; left: 110px; bottom: 5px; width: 34px; height: 34px; }
.cube {
  position: absolute; top: 5px; right: -2px; width: 39px; height: 46px;
  display: flex; flex-direction: column; align-items: center; justify-content: space-between;
  color: #c8c8c8; font-size: 7px; font-weight: bold;
}
.cube::before { content: ""; position: absolute; top: 4px; left: 1px; width: 38px; height: 38px; border: 4px solid #343434; border-radius: 50%; }
.cube span, .cube button { position: relative; }
.cube .w { position: absolute; left: -4px; top: 20px; }
.cube button { width: 18px; height: 18px; background: #a9a9a9; color: #444; font-size: 5px; }
.wcs { position: absolute; top: 57px; right: 8px; width: 19px; height: 7px; border-radius: 2px; background: #77777c; color: #aaa; }
.navbar { position: absolute; top: 75px; right: 0; width: 3px; height: 86px; background: #555; border-radius: 2px 0 0 2px; }
.history { position: absolute; left: 154px; bottom: 12px; display: grid; gap: 2px; justify-items: start; font-family: "Liberation Mono", monospace; }
.history span { background: #4a4a4a; color: #d0d0d0; padding: 0 1px; }
.history span + span { background: #707070; color: #fff; }
.command { position: absolute; left: 128px; right: 117px; bottom: 0; height: 11px; display: flex; align-items: center; gap: 3px; background: #24262c; color: #c3c9cf; }
.command svg { width: 6px; height: 6px; }
.grip { width: 3px; height: 7px; background: #555; }
.prompt { display: flex; align-items: center; gap: 1px; flex: 1; height: 11px; padding: 0 2px; background: #b0b0b0; }
.prompt .caret { background: #555; }
.prompt input { flex: 1; min-width: 0; margin-left: 3px; font-family: "Liberation Mono", monospace; }
.prompt input::placeholder { color: #444; opacity: 1; }

.status { display: flex; justify-content: space-between; height: 14px; background: #222b36; border-top: 1px solid #36404c; }
.layouts { display: flex; align-items: center; gap: 3px; padding-left: 6px; }
.layouts .on { padding: 3px 6px 3px 7px; background: #3b4654; color: #fff; font-weight: bold; clip-path: polygon(3px 0, 100% 0, calc(100% - 3px) 100%, 0 100%); }
.toggles { display: flex; align-items: center; gap: 1px; }
.toggles button { width: 10px; height: 10px; color: #e0e3e6; }
.toggles .model { width: 18px; background: #303a47; }
.toggles .lit { background: #5084b4; }
.toggles svg { width: 7px; height: 7px; }
.toggles .caret { width: 4px; }
```
